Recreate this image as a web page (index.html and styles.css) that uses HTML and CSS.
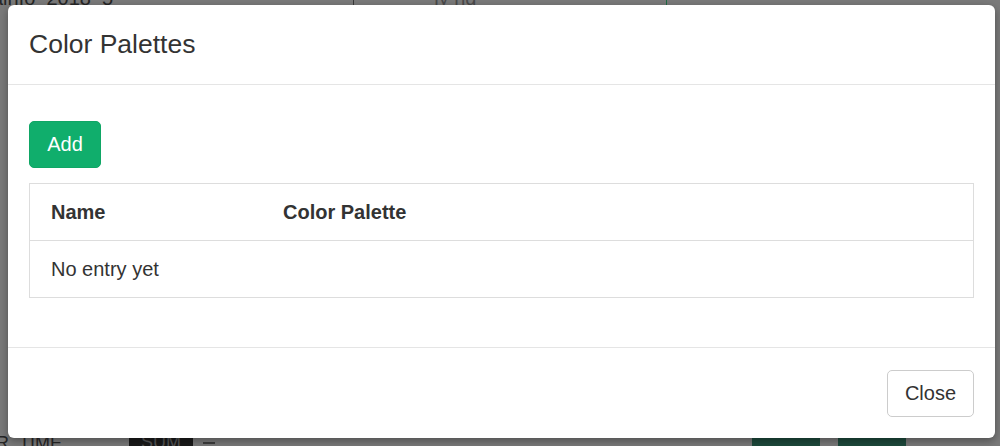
FILE: index.html
```html
<!DOCTYPE html>
<html>
<head>
<meta charset="utf-8">
<link rel="stylesheet" href="styles.css">
</head>
<body>
<div class="page">
  <div class="bg">
    <div class="bg-top">
      <span class="bg-file">ainfo_2018_5</span>
      <span class="bg-sep"></span>
      <span class="bg-mid">ly ng</span>
      <span class="bg-sep green"></span>
    </div>
    <div class="bg-side">
      <span class="bg-red"></span>
    </div>
    <div class="bg-bottom">
      <span class="bg-label">R_TIME</span>
      <span class="bg-sum">SUM</span>
      <span class="bg-dash"></span>
      <span class="bg-spacer"></span>
      <span class="bg-green"></span>
      <span class="bg-green"></span>
    </div>
  </div>

  <div class="modal">
    <div class="modal-header">
      <h4 class="modal-title">Color Palettes</h4>
    </div>
    <div class="modal-body">
      <button class="btn btn-add">Add</button>
      <div class="table">
        <div class="row head">
          <div class="cell name">Name</div>
          <div class="cell">Color Palette</div>
        </div>
        <div class="row">
          <div class="cell name">No entry yet</div>
          <div class="cell"></div>
        </div>
      </div>
    </div>
    <div class="modal-footer">
      <button class="btn btn-close">Close</button>
    </div>
  </div>
</div>
</body>
</html>
```

FILE: styles.css
```css
* { box-sizing: border-box; }
html, body { margin: 0; padding: 0; }
body {
  font-family: "Liberation Sans", Arial, sans-serif;
  color: #333;
  background: #7a7a7a;
}
.page {
  position: relative;
  width: 1000px;
  height: 446px;
  overflow: hidden;
  background: #7a7a7a;
}
.bg {
  height: 446px;
  display: flex;
  flex-direction: column;
  justify-content: space-between;
  color: #262626;
}
.bg-top {
  display: flex;
  align-items: flex-end;
  height: 5px;
  font-size: 20px;
  line-height: 20px;
  overflow: visible;
}
.bg-file {
  margin-bottom: -3px;
  margin-left: -8px;
}
.bg-sep {
  width: 1px;
  height: 5px;
  background: #3a3a3a;
  margin-left: 240px;
}
.bg-sep.green {
  background: #1e6b45;
  margin-left: 190px;
}
.bg-mid {
  margin-left: 80px;
  margin-bottom: -3px;
  color: #4a4a4a;
}
.bg-side {
  display: flex;
  justify-content: flex-end;
}
.bg-red {
  width: 8px;
  height: 34px;
  background: #6e2a35;
  border-radius: 8px 0 0 8px;
  margin-top: -280px;
}
.bg-bottom {
  height: 8px;
  display: flex;
  align-items: flex-start;
  font-size: 18px;
  line-height: 18px;
}
.bg-label {
  margin-top: -4px;
  margin-left: -4px;
  width: 133px;
  color: #262626;
}
.bg-sum {
  width: 64px;
  height: 8px;
  background: #1a1a1a;
  color: #555;
  text-align: center;
  overflow: hidden;
  line-height: 8px;
}
.bg-dash {
  width: 12px;
  height: 2px;
  background: #3d3d3d;
  margin: 4px 0 0 10px;
}
.bg-spacer { flex: 1; }
.bg-green {
  width: 68px;
  height: 8px;
  background: #1d4a3c;
  margin-right: 18px;
}
.bg-green:last-child { margin-right: 94px; }

.modal {
  position: absolute;
  left: 8px;
  top: 5px;
  width: 987px;
  height: 433px;
  background: #fff;
  border-radius: 6px;
  box-shadow: 0 3px 8px rgba(0,0,0,0.35);
  display: flex;
  flex-direction: column;
}
.modal-header {
  height: 80px;
  padding: 0 21px;
  display: flex;
  align-items: center;
  border-bottom: 1px solid #e5e5e5;
}
.modal-title {
  margin: 0;
  font-size: 26.5px;
  font-weight: normal;
  color: #333;
  line-height: 1;
}
.modal-body {
  padding: 36px 21px 49px;
  display: flex;
  flex-direction: column;
  align-items: flex-start;
}
.btn {
  font-family: "Liberation Sans", Arial, sans-serif;
  font-size: 20px;
  height: 47px;
  border-radius: 5px;
  padding: 0;
  cursor: pointer;
}
.btn-add {
  width: 72px;
  background: #10ae6c;
  border: 1px solid #0fa665;
  color: #fff;
  margin-bottom: 15px;
}
.table {
  width: 945px;
  border: 1px solid #dddddd;
}
.row {
  display: flex;
  height: 57px;
  align-items: center;
  font-size: 20px;
}
.row + .row {
  border-top: 1px solid #dddddd;
}
.row.head {
  height: 56px;
  font-weight: bold;
}
.cell {
  padding-left: 21px;
}
.cell.name {
  width: 232px;
}
.modal-footer {
  flex: 1;
  border-top: 1px solid #e5e5e5;
  padding: 22px 21px 0;
  display: flex;
  justify-content: flex-end;
  align-items: flex-start;
}
.btn-close {
  width: 87px;
  background: #fff;
  border: 1px solid #cccccc;
  color: #333;
}
```
